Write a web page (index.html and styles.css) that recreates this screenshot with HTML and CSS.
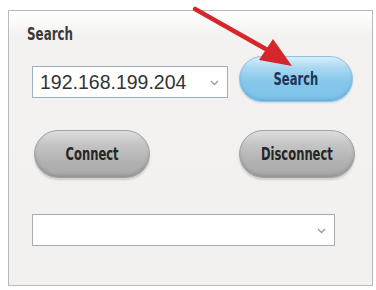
FILE: index.html
```html
<!DOCTYPE html>
<html>
<head>
<meta charset="utf-8">
<link rel="stylesheet" href="styles.css">
</head>
<body>
<div class="frame">
  <div class="title"><span class="narrow">Search</span></div>
  <div class="row row1">
    <div class="combo combo-ip">
      <span class="combo-text">192.168.199.204</span>
      <svg class="chev" width="9" height="6" viewBox="0 0 9 6"><path d="M1 1 L4.5 4.5 L8 1" fill="none" stroke="#9a9a9a" stroke-width="1.3"/></svg>
    </div>
    <div class="btn btn-blue"><span class="narrow">Search</span></div>
  </div>
  <div class="row row2">
    <div class="btn btn-gray"><span class="narrow">Connect</span></div>
    <div class="btn btn-gray"><span class="narrow">Disconnect</span></div>
  </div>
  <div class="row row3">
    <div class="combo combo-wide">
      <span class="combo-text"></span>
      <svg class="chev" width="9" height="6" viewBox="0 0 9 6"><path d="M1 1 L4.5 4.5 L8 1" fill="none" stroke="#9a9a9a" stroke-width="1.3"/></svg>
    </div>
  </div>
</div>
<svg class="arrow" width="376" height="80" viewBox="0 0 376 80">
  <line x1="195" y1="9" x2="271" y2="52" stroke="#d4262b" stroke-width="4.5" stroke-linecap="round"/>
  <polygon points="292,66 259,60 273,39" fill="#d4262b"/>
</svg>
</body>
</html>
```
FILE: styles.css
```css
html, body {
  margin: 0;
  padding: 0;
  background: #ffffff;
  width: 376px;
  height: 290px;
  overflow: hidden;
  position: relative;
}
.frame {
  box-sizing: border-box;
  margin: 10px 3px 0 8px;
  width: 365px;
  height: 276px;
  border: 1px solid #b9b9b9;
  background: linear-gradient(#ffffff 0px, #fbfbfa 10px, #f4f2f0 24px, #f3f1ef 100%);
  padding: 13px 0 0 23px;
}
.narrow {
  display: inline-block;
  transform: scaleX(0.68);
  white-space: nowrap;
}
.title {
  margin-left: -5px;
  font-family: "DejaVu Sans", sans-serif;
  font-weight: bold;
  font-size: 17.5px;
  line-height: 20px;
  color: #3a3a3a;
}
.title .narrow {
  transform-origin: left center;
}
.row {
  display: flex;
}
.row1 {
  margin-top: 12px;
  gap: 11px;
  align-items: flex-start;
}
.row2 {
  margin-top: 28px;
  padding-left: 2px;
  gap: 89px;
}
.row3 {
  margin-top: 36px;
}
.combo {
  box-sizing: border-box;
  height: 32px;
  background: #ffffff;
  display: flex;
  align-items: center;
  justify-content: space-between;
  padding: 0 8px 0 7px;
}
.combo-ip {
  width: 196px;
  margin-top: 10px;
  border: 1px solid #9fb0c4;
}
.combo-wide {
  width: 303px;
  border: 1px solid #ababab;
}
.combo-text {
  font-family: "Liberation Sans", Arial, sans-serif;
  font-size: 19.5px;
  color: #333333;
  padding-top: 1px;
}
.chev {
  margin-top: 2px;
}
.btn {
  box-sizing: border-box;
  width: 116px;
  height: 48px;
  border-radius: 24px;
  display: flex;
  align-items: center;
  justify-content: center;
  font-family: "DejaVu Sans", sans-serif;
  font-weight: bold;
  font-size: 17px;
}
.btn-blue {
  width: 114px;
  height: 46px;
  border-radius: 23px;
  color: #1d3657;
  border: 1px solid #8ec3e0;
  background: linear-gradient(#d9eef9 0%, #a9d8f1 25%, #86c8ec 55%, #7cc2ea 100%);
  box-shadow: inset 0 -2px 3px rgba(70, 140, 190, 0.35), 0 1px 2px rgba(0,0,0,0.12);
}
.btn-gray {
  color: #262626;
  border: 1px solid #a3a3a3;
  background: linear-gradient(#dedede 0%, #c4c4c4 30%, #b0b0b0 70%, #a9a9a9 100%);
  box-shadow: inset 0 -2px 3px rgba(80, 80, 80, 0.25), 0 2px 2px rgba(0,0,0,0.15);
}
.arrow {
  position: absolute;
  left: 0;
  top: 0;
}
```
